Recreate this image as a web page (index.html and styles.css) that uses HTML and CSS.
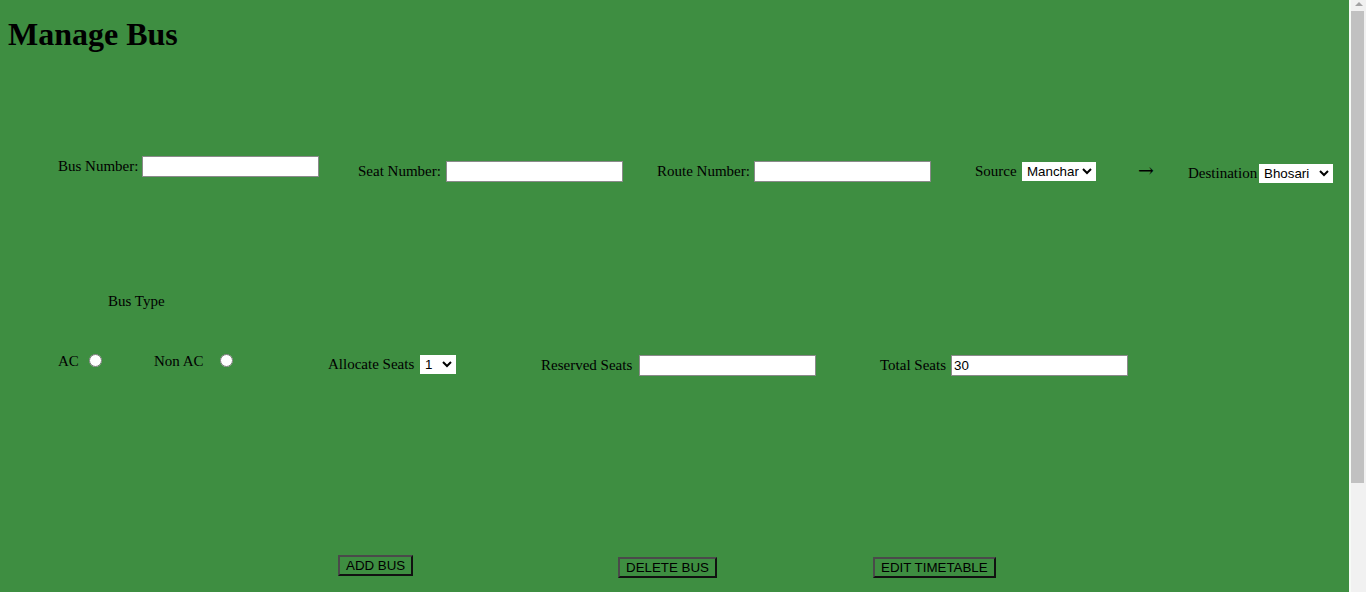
FILE: index.html
```html
<!DOCTYPE html>
<html>
<head>
<meta charset="utf-8">
<title>Manage Bus</title>
<link rel="stylesheet" href="styles.css">
</head>
<body>
<h1 class="title">Manage Bus</h1>

<div class="row row-top">
  <div class="field f-bus"><span class="lbl w-bus">Bus Number:</span><input class="txt" type="text"></div>
  <div class="field f-seat"><span class="lbl w-seat">Seat Number:</span><input class="txt" type="text"></div>
  <div class="field f-route"><span class="lbl w-route">Route Number:</span><input class="txt" type="text"></div>
  <div class="field f-source"><span class="lbl w-source">Source</span><select class="sel sel-place"><option>Manchar</option></select></div>
  <div class="field f-arrow"><span class="arrow">&#8594;</span></div>
  <div class="field f-dest"><span class="lbl w-dest">Destination</span><select class="sel sel-place"><option>Bhosari</option></select></div>
</div>

<div class="bus-type">Bus Type</div>

<div class="row row-mid">
  <div class="field f-ac"><span class="lbl">AC</span><input class="radio r-ac" type="radio" name="type"></div>
  <div class="field f-nonac"><span class="lbl">Non AC</span><input class="radio r-nonac" type="radio" name="type"></div>
  <div class="field f-alloc"><span class="lbl w-alloc">Allocate Seats</span><select class="sel sel-num"><option>1</option></select></div>
  <div class="field f-res"><span class="lbl w-res">Reserved Seats</span><input class="txt" type="text"></div>
  <div class="field f-total"><span class="lbl w-total">Total Seats</span><input class="txt" type="text" value="30"></div>
</div>

<div class="actions">
  <div class="act act-add"><button class="btn">ADD BUS</button></div>
  <div class="act act-del"><button class="btn">DELETE BUS</button></div>
  <div class="act act-edit"><button class="btn">EDIT TIMETABLE</button></div>
</div>

<div class="scrollbar" aria-hidden="true">
  <div class="scroll-up"></div>
  <div class="scroll-thumb"></div>
</div>
</body>
</html>
```

FILE: styles.css
```css
html {
  background: #3e8e41;
}
body {
  margin: 0;
  padding: 8px;
  min-height: 730px;
  box-sizing: border-box;
  background: #3e8e41;
  font-family: "Liberation Serif", "Times New Roman", serif;
  color: #000;
}
.title {
  margin: 8px 0 0;
  font-size: 32px;
  font-weight: bold;
  line-height: 37px;
  height: 37px;
}
.row {
  display: flex;
  align-items: flex-start;
  padding-left: 50px;
}
.row-top {
  margin-top: 103px;
  height: 27px;
}
.field {
  display: flex;
  align-items: center;
  flex: none;
}
.lbl {
  font-size: 15px;
  line-height: 17px;
  margin-right: 4px;
  white-space: nowrap;
  flex: none;
}
.w-bus { width: 84px; margin-right: 0; }
.w-seat { width: 88px; margin-right: 0; }
.w-route { width: 97px; margin-right: 0; }
.w-source { width: 47px; margin-right: 0; }
.w-dest { width: 71px; margin-right: 0; }
.w-alloc { width: 92px; margin-right: 0; }
.w-res { width: 98px; margin-right: 0; }
.w-total { width: 71px; margin-right: 0; }

.txt {
  box-sizing: border-box;
  width: 177px;
  height: 21px;
  margin: 0;
  padding: 1px 2px;
  border: 1px solid #8a8a8a;
  background: #fff;
  font-family: "Liberation Sans", Arial, sans-serif;
  font-size: 13.33px;
  color: #000;
}
.sel {
  box-sizing: border-box;
  height: 19px;
  margin: 0;
  font-family: "Liberation Sans", Arial, sans-serif;
  font-size: 13.33px;
  background: #fff;
  color: #000;
  border: 1px solid #fff;
  border-radius: 0;
}
.sel-place { width: 74px; }
.sel-num { width: 36px; }

.f-bus { width: 300px; }
.f-seat { width: 299px; margin-top: 5px; }
.f-route { width: 318px; margin-top: 5px; }
.f-source { width: 163px; margin-top: 6px; }
.f-arrow { width: 50px; margin-top: 5px; }
.arrow {
  font-size: 19px;
  line-height: 19px;
  font-family: "DejaVu Serif", "Liberation Serif", serif;
  font-weight: 300;
}
.f-dest { margin-top: 8px; }

.bus-type {
  margin-top: 110px;
  padding-left: 100px;
  font-size: 15px;
  line-height: 17px;
}

.row-mid {
  margin-top: 44px;
  height: 21px;
}
.radio {
  width: 13px;
  height: 13px;
  margin: 0;
  align-self: flex-start;
}
.f-ac { width: 96px; }
.r-ac { margin-left: 10px; }
.f-nonac { width: 174px; }
.r-nonac { margin-left: 16px; }
.f-ac .lbl, .f-nonac .lbl { line-height: 15px; margin-top: 0; margin-right: 0; }
.f-alloc { width: 213px; margin-top: 1px; }
.f-res { width: 339px; margin-top: 1px; }
.f-total { margin-top: 1px; }

.actions {
  display: flex;
  align-items: flex-start;
  margin-top: 180px;
  padding-left: 330px;
}
.act { flex: none; }
.act-add { width: 280px; }
.act-del { width: 255px; margin-top: 2px; }
.act-edit { margin-top: 2px; }
.btn {
  box-sizing: border-box;
  height: 21px;
  margin: 0;
  padding: 1px 6px;
  background: transparent;
  border-style: solid;
  border-width: 2px;
  border-color: #4a4a4a #111 #111 #4a4a4a;
  font-family: "Liberation Sans", Arial, sans-serif;
  font-size: 13.33px;
  color: #000;
  line-height: 15px;
}

/* window scrollbar */
.scrollbar {
  position: fixed;
  top: 0;
  right: 0;
  width: 15px;
  height: 100%;
  background: #f1f1f1;
  border-left: 2px solid #f6faf6;
}
.scroll-up {
  width: 0;
  height: 0;
  margin: 2px auto 0;
  border-left: 4px solid transparent;
  border-right: 4px solid transparent;
  border-bottom: 4px solid #a3a3a3;
}
.scroll-thumb {
  margin: 5px 2px 0 0;
  height: 472px;
  background: #c1c1c1;
}
```
